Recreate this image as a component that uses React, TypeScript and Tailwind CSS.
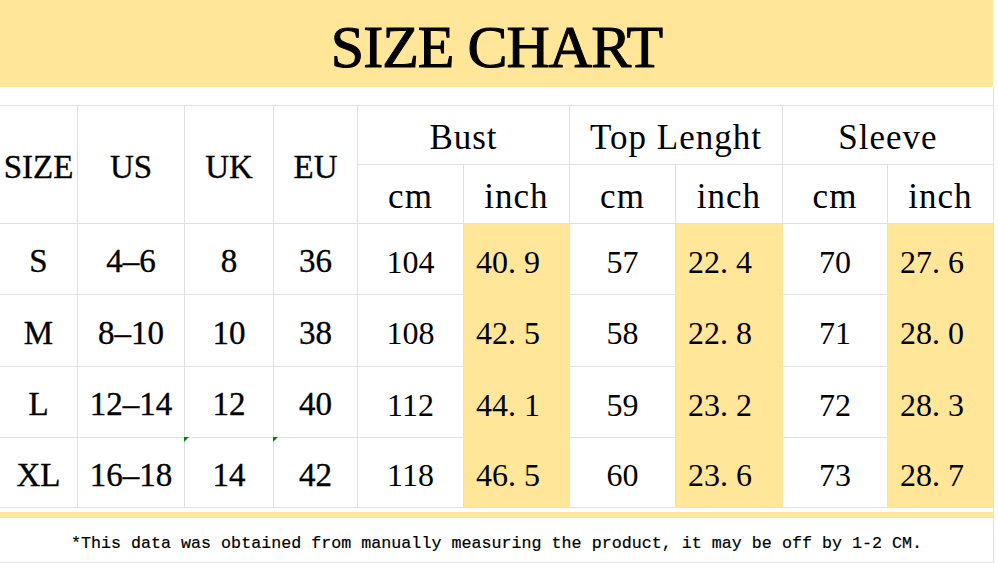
const serif = "font-['Liberation_Serif',serif]";

type Cell = { text: string; yellow?: boolean; bold?: boolean; mark?: boolean; last?: boolean };

const rows = [
  { size: "S", us: "4–6", uk: "8", eu: "36", vals: ["104", "40.9", "57", "22.4", "70", "27.6"] },
  { size: "M", us: "8–10", uk: "10", eu: "38", vals: ["108", "42.5", "58", "22.8", "71", "28.0"] },
  { size: "L", us: "12–14", uk: "12", eu: "40", vals: ["112", "44.1", "59", "23.2", "72", "28.3"] },
  { size: "XL", us: "16–18", uk: "14", eu: "42", vals: ["118", "46.5", "60", "23.6", "73", "28.7"] },
];

// SimSun style: the dot takes a full digit cell
function Decimal({ value }: { value: string }) {
  const [a, b] = value.split(".");
  return (
    <span>
      {a}
      <span className="inline-block w-[16px]">.</span>
      {b}
    </span>
  );
}

function DataCell({ text, yellow, bold, mark, last }: Cell) {
  return (
    <div
      className={`relative flex items-center pt-[5px] border-b text-[32px] leading-none ${serif} ${
        last ? "" : "border-r"
      } ${
        yellow
          ? "bg-[#ffe699] border-[#ffe699] justify-start pl-3"
          : "border-[#e0e0e0] justify-center"
      } ${bold ? "text-[33px] [-webkit-text-stroke:0.35px_#000]" : ""}`}
    >
      {mark && (
        <span className="absolute left-[-1px] top-[-1px] w-0 h-0 border-t-[5px] border-r-[5px] border-t-[#0a7d0a] border-r-transparent" />
      )}
      {text.includes(".") ? <Decimal value={text} /> : text}
    </div>
  );
}

function HeadCell({ text, className = "" }: { text: string; className?: string }) {
  return (
    <div
      className={`flex items-center justify-center pt-[5px] border-b border-r border-[#e0e0e0] leading-none ${serif} ${className}`}
    >
      {text}
    </div>
  );
}

export default function App() {
  return (
    <div className="w-[998px] h-[563px] bg-white text-black overflow-hidden">
      <div
        className={`w-[993px] h-[87px] bg-[#ffe699] flex items-center justify-center pt-[6px] text-[60px] leading-none tracking-[-1px] [-webkit-text-stroke:1px_#000] ${serif}`}
      >
        SIZE CHART
      </div>

      <div className="w-[994px] h-[476px] border-r border-b border-[#e0e0e0]">
        <div className="h-[18px]" />

        <div className="grid grid-cols-[78px_107px_89px_84px_106px_106px_106px_107px_105px_105px] grid-rows-[59px_59px_71px_72px_71px_70px] border-t border-[#e0e0e0]">
          <HeadCell text="SIZE" className="row-span-2 text-[33px] [-webkit-text-stroke:0.35px_#000]" />
          <HeadCell text="US" className="row-span-2 text-[33px] [-webkit-text-stroke:0.35px_#000]" />
          <HeadCell text="UK" className="row-span-2 text-[33px] [-webkit-text-stroke:0.35px_#000]" />
          <HeadCell text="EU" className="row-span-2 text-[33px] [-webkit-text-stroke:0.35px_#000]" />
          <HeadCell text="Bust" className="col-span-2 text-[35px] tracking-[1px]" />
          <HeadCell text="Top Lenght" className="col-span-2 text-[35px] tracking-[1px]" />
          <HeadCell text="Sleeve" className="col-span-2 text-[35px] tracking-[1px] border-r-0" />
          <HeadCell text="cm" className="text-[35px] tracking-[1px]" />
          <HeadCell text="inch" className="text-[35px] tracking-[1px]" />
          <HeadCell text="cm" className="text-[35px] tracking-[1px]" />
          <HeadCell text="inch" className="text-[35px] tracking-[1px]" />
          <HeadCell text="cm" className="text-[35px] tracking-[1px]" />
          <HeadCell text="inch" className="text-[35px] tracking-[1px] border-r-0" />

          {rows.map((r, i) => (
            <div key={r.size} className="contents">
              <DataCell text={r.size} bold />
              <DataCell text={r.us} bold />
              <DataCell text={r.uk} bold mark={i === 3} />
              <DataCell text={r.eu} bold mark={i === 3} />
              {r.vals.map((v, j) => (
                <DataCell key={j} text={v} yellow={j % 2 === 1} last={j === 5} />
              ))}
            </div>
          ))}
        </div>

        <div className="h-[4px]" />
        <div className="w-[993px] h-[6px] bg-[#ffe699]" />
        <div className="h-[43px] flex items-center justify-center pt-[10px] text-[16.7px] leading-none [-webkit-text-stroke:0.2px_#000] font-['Liberation_Mono',monospace]">
          *This data was obtained from manually measuring the product, it may be off by 1-2 CM.
        </div>
      </div>
    </div>
  );
}
